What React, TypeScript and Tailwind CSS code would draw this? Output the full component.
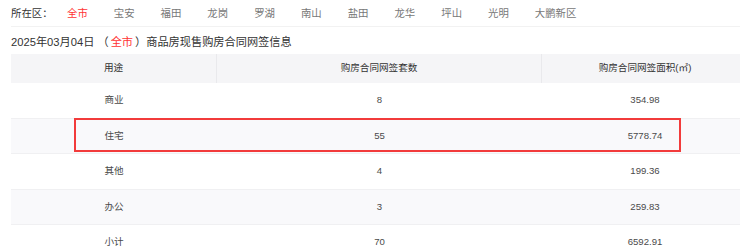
import React from "react";

const districts = ["宝安", "福田", "龙岗", "罗湖", "南山", "盐田", "龙华", "坪山", "光明", "大鹏新区"];

const rows = [
  { name: "商业", count: "8", area: "354.98" },
  { name: "住宅", count: "55", area: "5778.74" },
  { name: "其他", count: "4", area: "199.36" },
  { name: "办公", count: "3", area: "259.83" },
  { name: "小计", count: "70", area: "6592.91" },
];

export default function App() {
  return (
    <div className="relative w-[740px] h-[250px] overflow-hidden bg-white pl-[11px] [font-family:'Liberation_Sans','Noto_Sans_CJK_SC',sans-serif]">
      {/* district nav */}
      <div className="flex h-[27px] items-center border-b border-[#f2f2f2] pt-[2px] text-[10.4px]">
        <span className="w-[56px] text-[#333]">所在区：</span>
        <div className="flex gap-[26px]">
          <span className="text-[#ff3333]">全市</span>
          {districts.map((d) => (
            <span key={d} className="text-[#777]">
              {d}
            </span>
          ))}
        </div>
      </div>

      {/* title */}
      <div className="flex h-[27px] items-center pt-[3px] text-[11.2px] text-[#333]">
        <span>
          2025年03月04日&nbsp;（<span className="px-[2px] text-[#ff3333]">全市</span>）商品房现售购房合同网签信息
        </span>
      </div>

      {/* table */}
      <div className="w-[737px] text-[9.6px]">
        <div className="flex h-[29px] bg-[#f5f5f7] text-[#333]">
          <div className="flex w-[206px] items-center justify-center border-r border-[#e9e9ec]">用途</div>
          <div className="flex w-[325px] items-center justify-center border-r border-[#e9e9ec]">购房合同网签套数</div>
          <div className="flex flex-1 items-center justify-center">购房合同网签面积(㎡)</div>
        </div>
        {rows.map((r, i) => (
          <div
            key={r.name}
            className={`flex h-[35.5px] border-b border-[#f0f0f2] text-[#4a4a4a] ${i % 2 === 1 ? "bg-[#f9f9fb]" : "bg-white"}`}
          >
            <div className="flex w-[206px] items-center justify-center">{r.name}</div>
            <div className="flex w-[325px] items-center justify-center">{r.count}</div>
            <div className="flex flex-1 items-center justify-center">{r.area}</div>
          </div>
        ))}
      </div>

      {/* highlight annotation */}
      <div className="pointer-events-none absolute left-[74px] top-[118px] h-[34px] w-[607px] border-2 border-[#f23b3b]" />
    </div>
  );
}
